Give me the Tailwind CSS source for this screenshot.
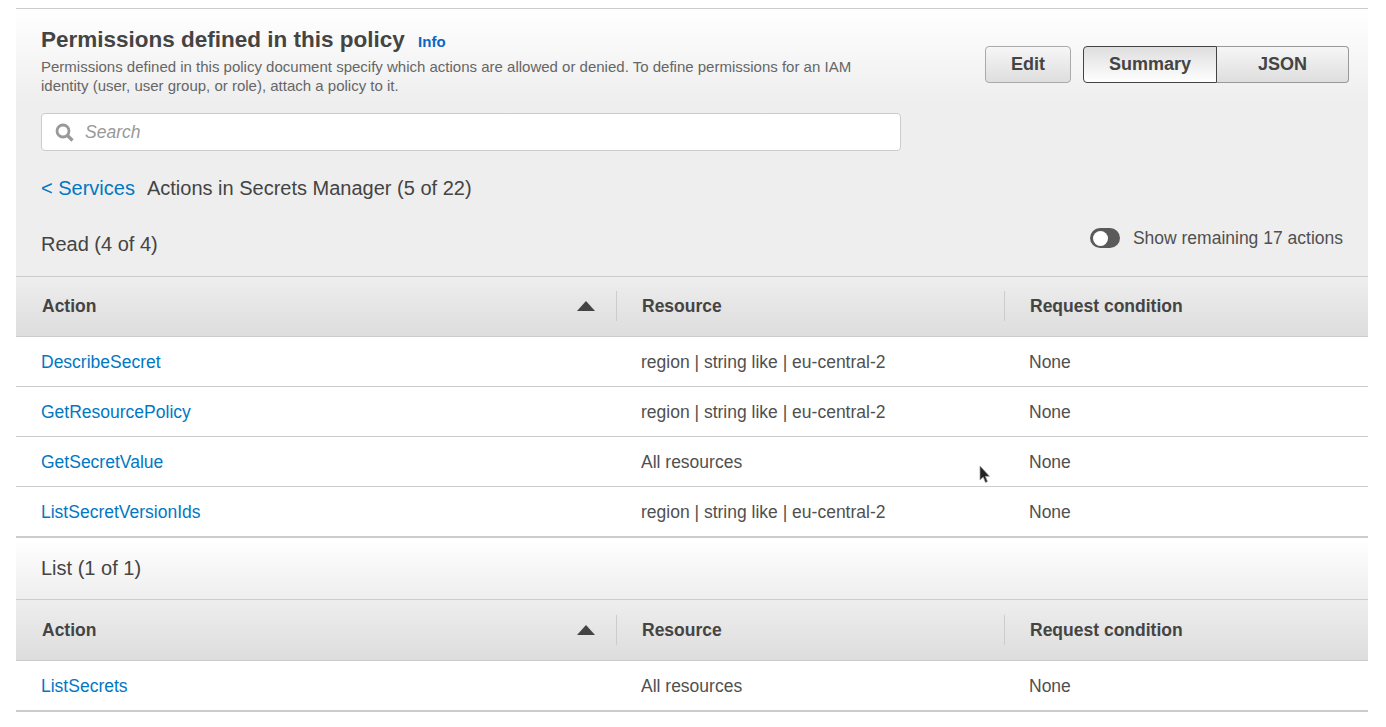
<!DOCTYPE html>
<html lang="en">
<head>
    <meta charset="utf-8" />
    <title>Permissions defined in this policy</title>
    <script src="https://cdn.jsdelivr.net/npm/@tailwindcss/browser@4"></script>
</head>
<body class="bg-white text-[#444] font-['Liberation_Sans',Arial,sans-serif] relative h-[727px] overflow-hidden">
<main class="ml-4 w-[1352px] pt-2">
    <!-- Policy header -->
    <section class="border-t border-[#ccc] h-[268px] bg-gradient-to-b from-white to-[#eee] to-[35%] bg-[#eee] px-[25px] relative">
        <div class="flex justify-between">
            <div class="w-[860px]">
                <h2 class="pt-[17px] text-[22.5px] leading-7 font-bold">Permissions defined in this policy <a class="ml-[7px] text-[15px] text-[#0a66c2]">Info</a></h2>
                <p class="mt-[1px] text-[15px] leading-[19px] text-[#666]">Permissions defined in this policy document specify which actions are allowed or denied. To define permissions for an IAM identity (user, user group, or role), attach a policy to it.</p>
            </div>
            <div class="flex pt-[37px] -mr-[6px] gap-3 font-bold text-lg">
                <button class="w-[86px] h-[37px] pb-[2px] rounded border border-[#aaa] bg-gradient-to-b from-[#f6f6f6] to-[#dedede]">Edit</button>
                <div class="flex">
                    <button class="w-[134px] h-[37px] pb-[2px] rounded-l border border-[#444] bg-gradient-to-b from-[#dedede] to-white">Summary</button>
                    <button class="w-[132px] h-[37px] pb-[2px] rounded-r border border-l-0 border-[#999] bg-gradient-to-b from-[#f6f6f6] to-[#dedede]">JSON</button>
                </div>
            </div>
        </div>
        <div class="mt-[18px] w-[860px] h-[38px] bg-white border border-[#ccc] rounded flex items-center pl-[13px] gap-[11px]">
            <svg width="19" height="19" viewBox="0 0 19 19" fill="none" stroke="#999"><circle cx="8" cy="8" r="6" stroke-width="2.8"/><path d="M12.500 12.500 17.500 17.500" stroke-width="3.200"/></svg>
            <span class="italic text-[17.5px] text-[#999]">Search</span>
        </div>
        <div class="mt-[25px] text-xl leading-6"><a class="text-[#0078c4]">&lt; Services</a><span class="ml-3">Actions in Secrets Manager (5 of 22)</span></div>
        <div class="mt-8 text-xl leading-6">Read (4 of 4)</div>
        <div class="absolute right-[25px] top-[219px] flex items-center gap-[13px] text-[17.5px] leading-5">
            <span class="w-[30px] h-5 rounded-full bg-[#5a5a5a] flex items-center pl-[3px]"><span class="w-[15px] h-[15px] rounded-full bg-white"></span></span>
            <span class="text-[#505050]">Show remaining 17 actions</span>
        </div>
    </section>

    <!-- Read actions -->
    <div class="grid grid-cols-[600px_388px_364px] h-[61px] pb-[2px] items-center border-y border-[#ccc] bg-gradient-to-b from-[#eee] to-[#ddd] text-[17.5px] font-bold">
        <div class="pl-[26px] pr-5 flex justify-between items-center"><span class="pt-[2px]">Action</span><svg width="20" height="12" viewBox="0 0 20 12" fill="#444"><path d="M10 1 19 11H1Z"/></svg></div>
        <div class="border-l border-[#ccc] h-[30px] pt-[2px] flex items-center pl-[25px]">Resource</div>
        <div class="border-l border-[#ccc] h-[30px] pt-[2px] flex items-center pl-[25px]">Request condition</div>
    </div>
    <div class="grid grid-cols-[600px_388px_364px] h-[50px] pt-[2px] items-center border-b border-[#ccc] text-[17.5px] text-[#505050] pl-[25px]">
        <a class="text-[#0078c4]">DescribeSecret</a><span>region | string like | eu-central-2</span><span>None</span>
    </div>
    <div class="grid grid-cols-[600px_388px_364px] h-[50px] pt-[2px] items-center border-b border-[#ccc] text-[17.5px] text-[#505050] pl-[25px]">
        <a class="text-[#0078c4]">GetResourcePolicy</a><span>region | string like | eu-central-2</span><span>None</span>
    </div>
    <div class="grid grid-cols-[600px_388px_364px] h-[50px] pt-[2px] items-center border-b border-[#ccc] text-[17.5px] text-[#505050] pl-[25px]">
        <a class="text-[#0078c4]">GetSecretValue</a><span>All resources</span><span>None</span>
    </div>
    <div class="grid grid-cols-[600px_388px_364px] h-[51px] pt-[2px] items-center border-b-2 border-[#ccc] text-[17.5px] text-[#505050] pl-[25px]">
        <a class="text-[#0078c4]">ListSecretVersionIds</a><span>region | string like | eu-central-2</span><span>None</span>
    </div>

    <!-- List actions -->
    <div class="h-[61px] pb-[2px] flex items-center px-[25px] text-xl bg-gradient-to-b from-white to-[#eee]">List (1 of 1)</div>
    <div class="grid grid-cols-[600px_388px_364px] h-[62px] items-center border-y border-[#ccc] bg-gradient-to-b from-[#eee] to-[#ddd] text-[17.5px] font-bold">
        <div class="pl-[26px] pr-5 flex justify-between items-center"><span>Action</span><svg width="20" height="12" viewBox="0 0 20 12" fill="#444"><path d="M10 1 19 11H1Z"/></svg></div>
        <div class="border-l border-[#ccc] h-[30px] flex items-center pl-[25px]">Resource</div>
        <div class="border-l border-[#ccc] h-[30px] flex items-center pl-[25px]">Request condition</div>
    </div>
    <div class="grid grid-cols-[600px_388px_364px] h-[51px] pt-[2px] items-center border-b-2 border-[#ccc] text-[17.5px] text-[#505050] pl-[25px]">
        <a class="text-[#0078c4]">ListSecrets</a><span>All resources</span><span>None</span>
    </div>
</main>

<!-- Mouse pointer caught in the screenshot -->
<svg class="absolute left-[979px] top-[465px]" width="12" height="20" viewBox="0 0 12 20"><path d="M1 1V15L4.200 12 6.500 17.500 8.500 16.500 6.300 11.300H10.500Z" fill="#222" stroke="#999" stroke-width="0.7"/></svg>
</body>
</html>
